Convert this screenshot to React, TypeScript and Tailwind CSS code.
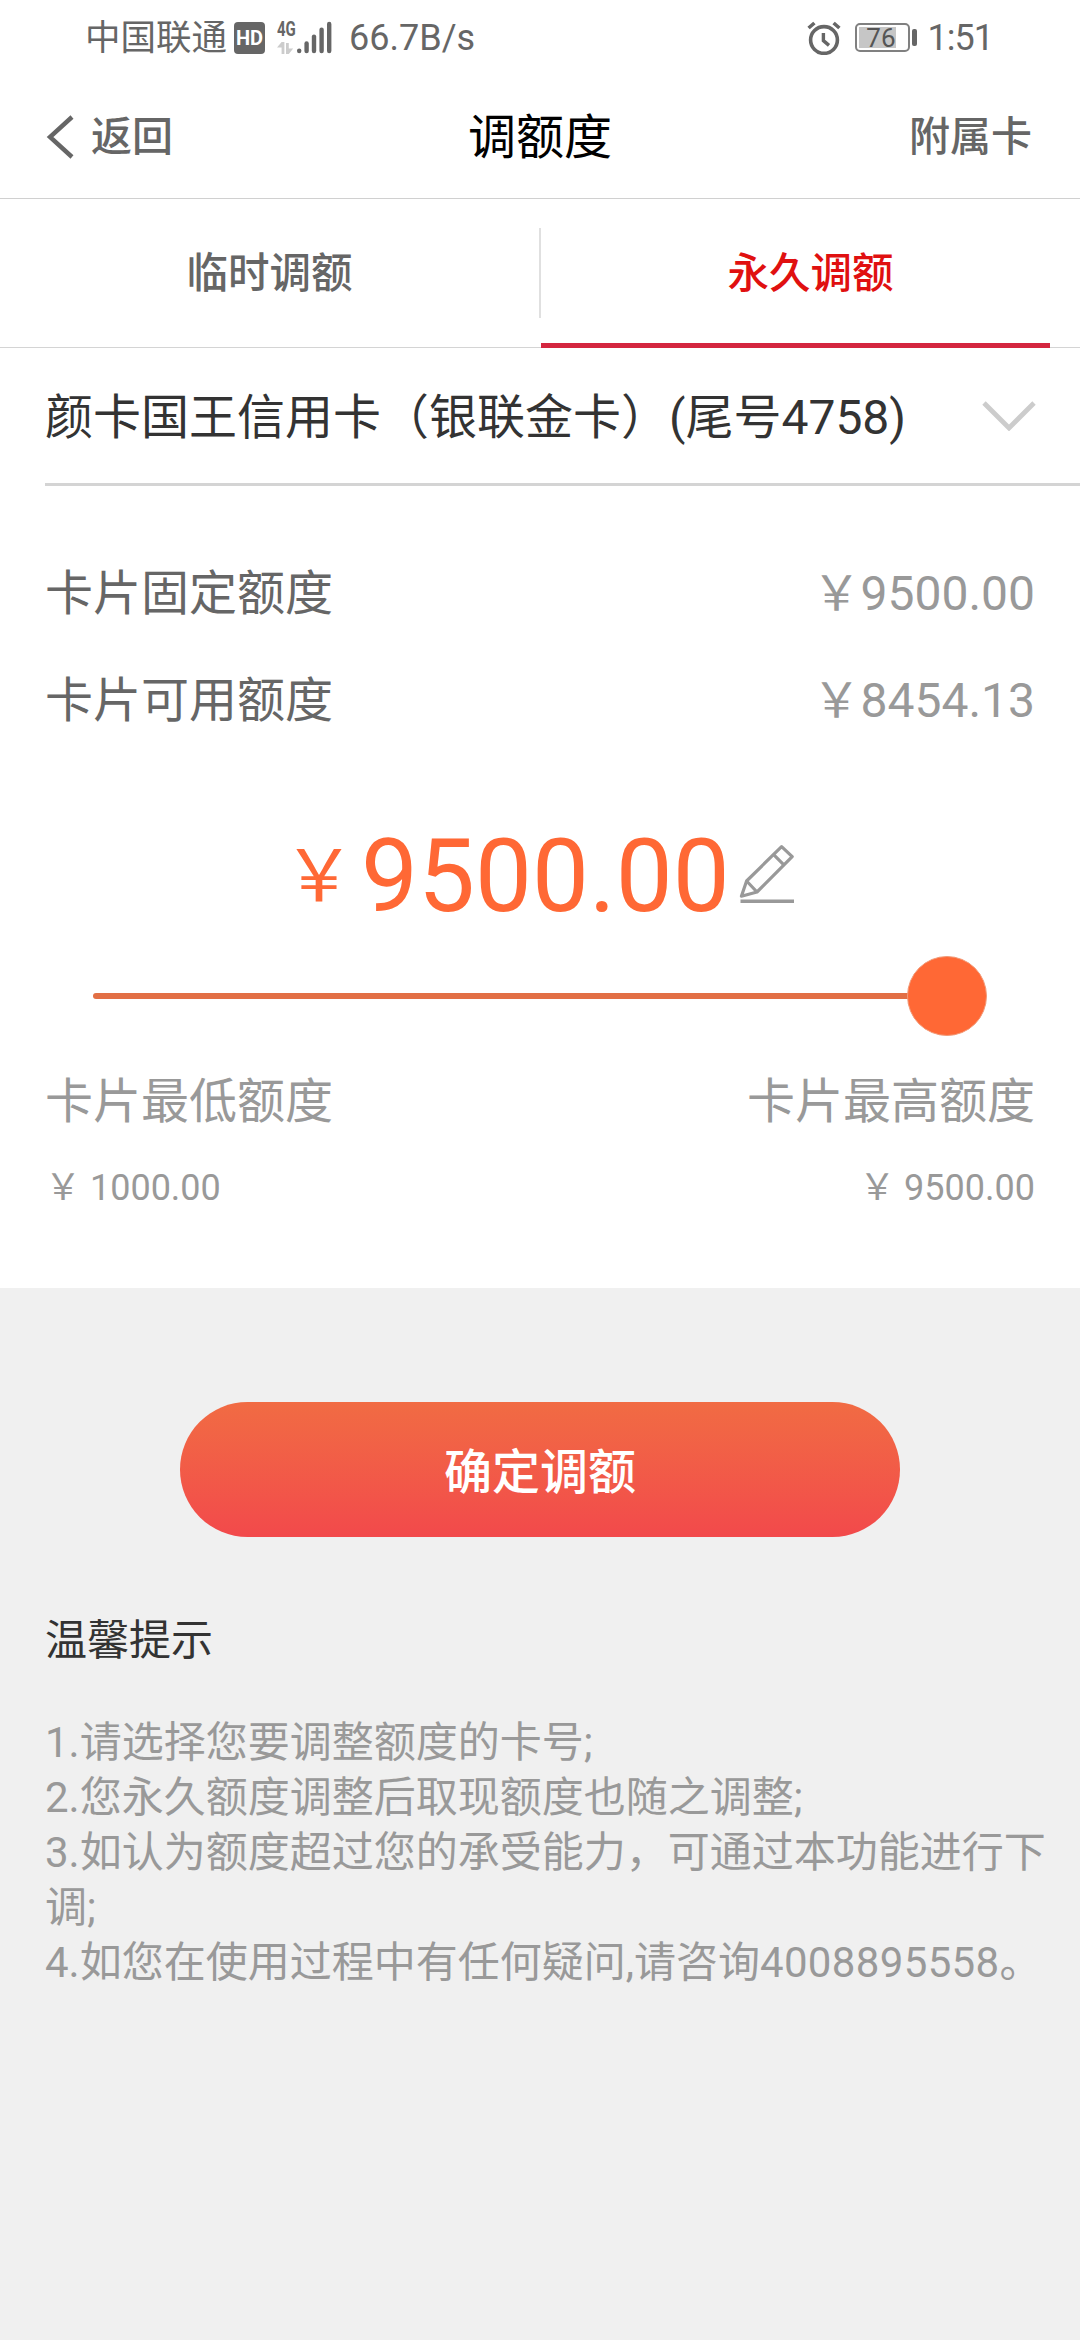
import * as React from "react";

const TIPS: React.ReactNode[] = [
  "1.请选择您要调整额度的卡号;",
  "2.您永久额度调整后取现额度也随之调整;",
  "3.如认为额度超过您的承受能力，可通过本功能进行下调;",
  <>
    4.如您在使用过程中有任何疑问,请咨询
    <span className="tracking-[0.35px]">4008895558</span>。
  </>,
];

function SignalIcon() {
  return (
    <svg className="ml-px h-[34px] w-[36px]" viewBox="0 0 36 34" fill="none">
      <g stroke="#666" strokeWidth="4.4" strokeLinecap="round">
        <path d="M3.2 29.6v.4" />
        <path d="M10.6 22.4V30" />
        <path d="M18 15.6V30" />
        <path d="M25.6 8.8V30" />
        <path d="M33.2 3V30" />
      </g>
    </svg>
  );
}

function AlarmIcon() {
  return (
    <svg className="h-[34px] w-[34px]" viewBox="0 0 34 34" fill="none" stroke="#666">
      <circle cx="17" cy="19" r="13.4" strokeWidth="3.6" />
      <path d="M16.4 12v7.6l5.6 4.8" strokeWidth="3.4" />
      <path d="M1.6 7 7.4 2M32.4 7 26.6 2" strokeWidth="3.6" />
    </svg>
  );
}

function PencilIcon() {
  return (
    <svg className="h-[60px] w-[56px]" viewBox="0 0 56 60" fill="none" stroke="#999" strokeWidth="3.2" strokeLinejoin="round">
      <path d="M2.4 53.2 7.6 38 42.6 3.6 53.2 13.6 18 49z" />
      <path d="M34.4 11.4 44.6 21.6M7.6 38 18 49" />
      <path d="M1.5 58.2H55" strokeWidth="3.4" />
    </svg>
  );
}

function StatusBar() {
  return (
    <div className="flex h-[75px] items-center pl-[85px] pr-[87px] text-[36px] leading-none text-[#666]">
      <span className="pt-[2px] text-[35.5px]">中国联通</span>
      <span className="ml-[7px] flex h-[32px] w-[31px] items-center justify-center rounded-[4px] bg-[#666] text-[20px] font-bold text-white">
        HD
      </span>
      <div className="ml-[12px] flex h-[34px] w-[18px] flex-col justify-between">
        <span className="w-[24px] origin-left scale-x-75 text-[20px] leading-[16px] font-bold">4G</span>
        <svg className="h-[13px] w-[17px]" viewBox="0 0 17 13" fill="#ccc">
          <path d="M4.6 0h2.8v12H4.6V5.5H0zM9 1h2.8v5.4h4.4L11.8 12H9z" />
        </svg>
      </div>
      <SignalIcon />
      <span className="ml-[17px]">66.7B/s</span>
      <div className="ml-auto flex items-center">
        <AlarmIcon />
        <div className="ml-[14px] h-[29px] w-[55px] rounded-[5px] border-2 border-[#808080] p-[2px]">
          <div className="flex h-full w-[37px] items-center justify-end bg-[#c6c6c6]">
            <span className="text-[26px] leading-none text-[#555]">76</span>
          </div>
        </div>
        <div className="ml-[2px] h-[17px] w-[5px] rounded-[2px] bg-[#666]" />
        <span className="ml-[11px] tracking-[-1px]">1:51</span>
      </div>
    </div>
  );
}

function NavBar() {
  return (
    <header className="grid h-[124px] grid-cols-3 items-center border-b border-[#d0d0d0] pl-[46px] pr-[46px] text-[41px] leading-none text-[#666]">
      <button className="flex items-center">
        <svg className="h-[44px] w-[28px]" viewBox="0 0 28 44" fill="none" stroke="#666" strokeWidth="4.4">
          <path d="M26 2 4 22l22 20" />
        </svg>
        <span className="ml-[17px] pt-[2px] font-medium">返回</span>
      </button>
      <h1 className="pt-[2px] text-center text-[48px] text-black">调额度</h1>
      <button className="pt-[2px] pr-[2px] text-right font-medium">附属卡</button>
    </header>
  );
}

function Tabs() {
  return (
    <div className="flex h-[149px] border-b border-[#d4d4d4] text-[41.5px] leading-none">
      <button className="flex h-[148px] w-[539px] items-center justify-center pt-[2px] font-medium text-[#666]">
        临时调额
      </button>
      <div className="mt-[29px] h-[90px] w-[2px] bg-[#e0e0e0]" />
      <button className="flex h-[149px] w-[509px] items-center justify-center border-b-[5px] border-[#d4263f] pt-[5px] pl-[30px] font-medium text-[#e01010]">
        永久调额
      </button>
    </div>
  );
}

function LimitRow({ label, value }: { label: string; value: string }) {
  return (
    <div className="flex h-[107px] items-center justify-between">
      <span className="text-[#666]">{label}</span>
      <span className="text-[#999]">{value}</span>
    </div>
  );
}

export default function App() {
  return (
    <div className="h-[2340px] w-[1080px] overflow-hidden bg-[#f0f0f0] font-['Roboto','Noto_Sans_CJK_SC',sans-serif]">
      <div className="h-[1288px] bg-white">
        <StatusBar />
        <NavBar />
        <Tabs />

        <div className="ml-[45px] flex h-[138px] items-center justify-between border-b-[3px] border-[#d4d4d4] pr-[44px] text-[48px] leading-none text-[#333]">
          <span className="pt-[4px]">颜卡国王信用卡（银联金卡）(尾号4758)</span>
          <svg className="h-[30px] w-[54px]" viewBox="0 0 54 30" fill="none" stroke="#ccc" strokeWidth="4.8">
            <path d="M2 2 27 27 52 2" />
          </svg>
        </div>

        <div className="pl-[45px] pr-[45px] pt-[54px] text-[48px] leading-none">
          <LimitRow label="卡片固定额度" value="￥9500.00" />
          <LimitRow label="卡片可用额度" value="￥8454.13" />
        </div>

        <div className="mt-[45px] mb-px flex h-[156px] items-center pl-[283px] leading-none text-[#ff6835]">
          <span className="text-[72px]">￥</span>
          <span className="ml-[6px] text-[101.4px]">9500.00</span>
          <span className="-mt-[8px] ml-[9px]">
            <PencilIcon />
          </span>
        </div>

        <div className="flex h-[80px] items-center pl-[93px]">
          <div className="h-[6px] w-[816px] rounded-l-full bg-[#e26f45]" />
          <div className="-ml-[2px] h-[80px] w-[80px] rounded-full border border-[#f29a78] bg-[#ff6835]" />
        </div>

        <div className="mt-[22px] px-[45px] leading-none text-[#999]">
          <div className="flex h-[88px] items-center justify-between text-[48px]">
            <span>卡片最低额度</span>
            <span>卡片最高额度</span>
          </div>
          <div className="flex h-[83px] items-center justify-between text-[36px]">
            <span>￥ 1000.00</span>
            <span>￥ 9500.00</span>
          </div>
        </div>
      </div>

      <button className="mx-auto mt-[114px] flex h-[135px] w-[720px] items-center justify-center rounded-full bg-linear-to-b from-[#f16b43] to-[#f2494b] pt-[7px] text-[48px] leading-none font-medium text-white">
        确定调额
      </button>

      <section className="pl-[45px] pr-[30px] text-[42px]">
        <h2 className="mt-[76px] leading-[55px] text-[#333]">温馨提示</h2>
        <div className="mt-[47px] leading-[55px] text-[#999]">
          {TIPS.map((tip, i) => (
            <p key={i}>{tip}</p>
          ))}
        </div>
      </section>
    </div>
  );
}
